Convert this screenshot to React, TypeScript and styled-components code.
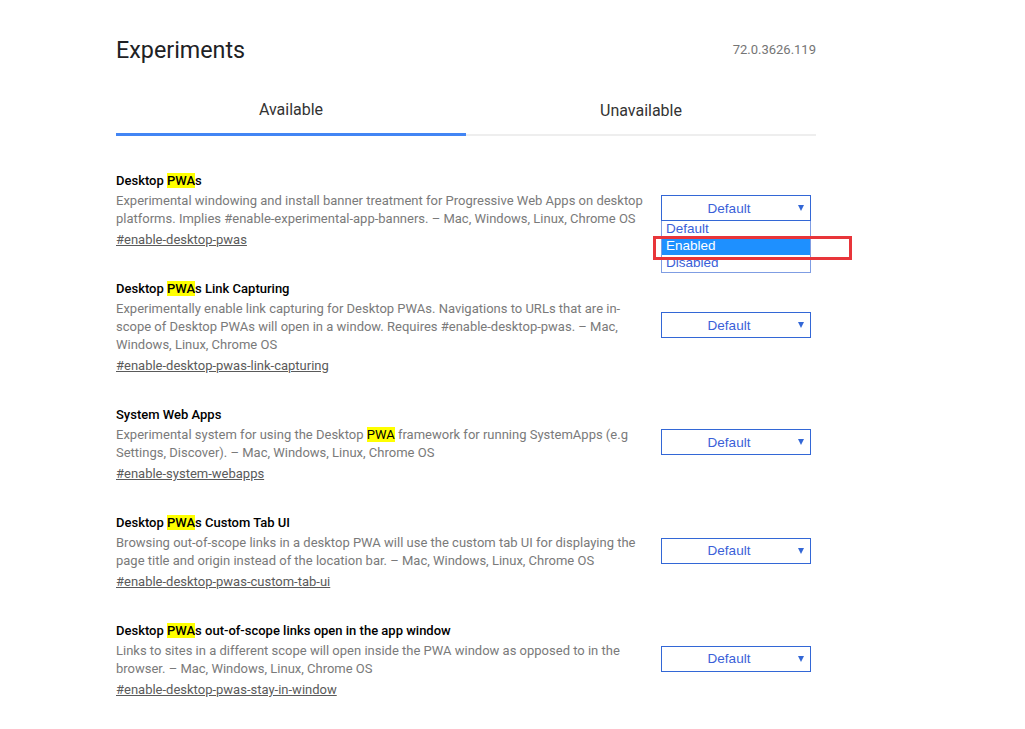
import React from "react";
import styled, { createGlobalStyle } from "styled-components";

const Global = createGlobalStyle`
  html, body { margin: 0; padding: 0; background: #fff; }
  body { font-family: Roboto, "Noto Sans", Arial, sans-serif; }
`;

const Page = styled.div`
  width: 700px;
  margin-left: 116px;
  padding-top: 34px;
`;

const Header = styled.header`
  display: flex;
  align-items: center;
  justify-content: space-between;
`;

const Title = styled.h1`
  margin: 0;
  font-size: 23.3px;
  line-height: 32px;
  font-weight: 400;
  color: #202124;
`;

const Version = styled.span`
  font-size: 13px;
  line-height: 18px;
  color: #757575;
`;

const Tabs = styled.nav`
  display: flex;
  align-items: flex-end;
  margin-top: 22px;
`;

const Tab = styled.div<{ $active?: boolean }>`
  flex: 1;
  text-align: center;
  font-size: 16px;
  line-height: 20px;
  color: #333;
  padding: 12px 0 13px;
  border-bottom: ${(p) => (p.$active ? "3px solid #4285f4" : "2px solid #eeeeee")};
`;

const List = styled.div`
  display: flex;
  flex-direction: column;
  gap: 31.2px;
  margin-top: 35.6px;
`;

const Row = styled.div`
  display: flex;
  align-items: center;
  padding-right: 5px;
`;

const Text = styled.div`
  width: 530px;
  margin-right: 15px;
`;

const Name = styled.div`
  font-size: 13px;
  line-height: 18px;
  font-weight: 500;
  color: #000;
  margin-bottom: 2px;
`;

const Mark = styled.mark`
  background: #ffff00;
  color: #000;
`;

const Desc = styled.div`
  font-size: 13px;
  line-height: 18px;
  color: #7a7a7a;
`;

const Permalink = styled.a`
  display: block;
  margin-top: 3px;
  font-size: 13px;
  line-height: 18px;
  color: #5a5a5a;
  text-decoration: underline;
`;

const SelectWrap = styled.div`
  position: relative;
  width: 150px;
  margin-bottom: 4px;
`;

const SelectBox = styled.div`
  box-sizing: border-box;
  width: 150px;
  height: 26px;
  padding-right: 14px;
  border: 1px solid #3367d6;
  background: #fff;
  display: flex;
  align-items: center;
  justify-content: center;
  position: relative;
  font-family: "Liberation Sans", Arial, sans-serif;
  font-size: 13.5px;
  color: #3b5fd8;
`;

const Arrow = styled.span`
  position: absolute;
  right: 6px;
  top: 9px;
  width: 0;
  height: 0;
  border-left: 3.5px solid transparent;
  border-right: 3.5px solid transparent;
  border-top: 6px solid #3367d6;
`;

const Dropdown = styled.ul`
  position: absolute;
  top: 26px;
  left: 0;
  width: 150px;
  box-sizing: border-box;
  margin: 0;
  padding: 0;
  list-style: none;
  border: 1px solid #7f9de3;
  border-top: none;
  background: #fff;
  font-family: "Liberation Sans", Arial, sans-serif;
  font-size: 13.5px;
  z-index: 2;
`;

const Option = styled.li<{ $selected?: boolean }>`
  height: 17px;
  line-height: 16px;
  padding-left: 4px;
  color: ${(p) => (p.$selected ? "#fff" : "#3b5fd8")};
  background: ${(p) => (p.$selected ? "#1e90ff" : "transparent")};
`;

const Annotation = styled.div`
  position: absolute;
  left: -8px;
  top: 41px;
  width: 199px;
  height: 24px;
  box-sizing: border-box;
  border: 3px solid #e8353a;
  z-index: 3;
`;

type Exp = {
  name: React.ReactNode;
  desc: React.ReactNode;
  link: string;
  open?: boolean;
};

const PWA = () => <Mark>PWA</Mark>;

const experiments: Exp[] = [
  {
    name: (
      <>
        Desktop <PWA />s
      </>
    ),
    desc:
      "Experimental windowing and install banner treatment for Progressive Web Apps on desktop platforms. Implies #enable-experimental-app-banners. – Mac, Windows, Linux, Chrome OS",
    link: "#enable-desktop-pwas",
    open: true,
  },
  {
    name: (
      <>
        Desktop <PWA />s Link Capturing
      </>
    ),
    desc:
      "Experimentally enable link capturing for Desktop PWAs. Navigations to URLs that are in-scope of Desktop PWAs will open in a window. Requires #enable-desktop-pwas. – Mac, Windows, Linux, Chrome OS",
    link: "#enable-desktop-pwas-link-capturing",
  },
  {
    name: "System Web Apps",
    desc: (
      <>
        Experimental system for using the Desktop <PWA /> framework for running SystemApps (e.g
        Settings, Discover). – Mac, Windows, Linux, Chrome OS
      </>
    ),
    link: "#enable-system-webapps",
  },
  {
    name: (
      <>
        Desktop <PWA />s Custom Tab UI
      </>
    ),
    desc:
      "Browsing out-of-scope links in a desktop PWA will use the custom tab UI for displaying the page title and origin instead of the location bar. – Mac, Windows, Linux, Chrome OS",
    link: "#enable-desktop-pwas-custom-tab-ui",
  },
  {
    name: (
      <>
        Desktop <PWA />s out-of-scope links open in the app window
      </>
    ),
    desc:
      "Links to sites in a different scope will open inside the PWA window as opposed to in the browser. – Mac, Windows, Linux, Chrome OS",
    link: "#enable-desktop-pwas-stay-in-window",
  },
];

export default function App() {
  return (
    <>
      <Global />
      <Page>
        <Header>
          <Title>Experiments</Title>
          <Version>72.0.3626.119</Version>
        </Header>
        <Tabs>
          <Tab $active>Available</Tab>
          <Tab>Unavailable</Tab>
        </Tabs>
        <List>
          {experiments.map((e, i) => (
            <Row key={i}>
              <Text>
                <Name>{e.name}</Name>
                <Desc>{e.desc}</Desc>
                <Permalink href={e.link}>{e.link}</Permalink>
              </Text>
              <SelectWrap>
                <SelectBox>
                  Default
                  <Arrow />
                </SelectBox>
                {e.open && (
                  <>
                    <Dropdown>
                      <Option>Default</Option>
                      <Option $selected>Enabled</Option>
                      <Option>Disabled</Option>
                    </Dropdown>
                    <Annotation />
                  </>
                )}
              </SelectWrap>
            </Row>
          ))}
        </List>
      </Page>
    </>
  );
}
